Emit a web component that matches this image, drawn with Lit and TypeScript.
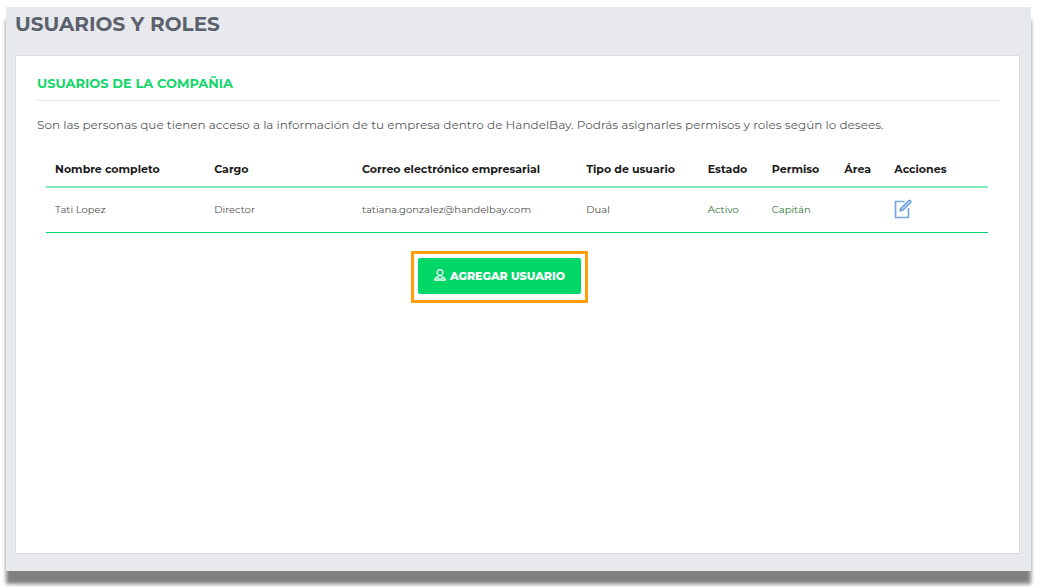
import { LitElement, html, css, svg } from "lit";
import { customElement, state } from "lit/decorators.js";

interface CompanyUser {
  name: string;
  position: string;
  email: string;
  type: string;
  status: string;
  permission: string;
  area: string;
}

const editIcon = svg`
  <svg class="edit-icon" viewBox="0 0 18 20" aria-hidden="true">
    <path d="M10.5 2.5H1.5V18.5H14.5V9" fill="none" stroke="#74a5dc" stroke-width="1.7"/>
    <path d="M5.8 12L6.8 9.3L14.6 1.4Q15.4 0.7 16.5 1.6Q17.6 2.6 16.8 3.6L8.8 11.4Z" fill="#a9cbee" stroke="#6499d4" stroke-width="1.1" stroke-linejoin="round"/>
    <path d="M5.8 12L6.8 9.3L8.8 11.4Z" fill="#6499d4"/>
  </svg>`;

const userIcon = svg`
  <svg class="user-icon" viewBox="0 0 12 12" aria-hidden="true">
    <circle cx="6" cy="3.6" r="2.9" fill="none" stroke="currentColor" stroke-width="1.3"/>
    <path d="M4.7 6.2V7.6L1.4 9L0.8 11.2H11.2L10.6 9L7.3 7.6V6.2" fill="none" stroke="currentColor" stroke-width="1.2"/>
    <path d="M2.5 9.8H9.5" stroke="currentColor" stroke-width="1"/>
  </svg>`;

@customElement("users-table")
export class UsersTable extends LitElement {
  static styles = css`
    :host { display: block; }
    .table {
      width: 100%;
      table-layout: fixed;
      border-collapse: collapse;
      font-size: 11px;
      line-height: 16px;
      text-align: left;
    }
    .table th, .table td { box-sizing: border-box; padding: 0 0 0 9px; white-space: nowrap; }
    .table th { height: 35px; font-weight: 700; color: #1b1b1b; border-bottom: 2px solid #80ebb2; }
    .table td { height: 45px; font-size: 10px; color: #505050; border-bottom: 1px solid #00d766; }
    .table .ok { color: #2c7433; }
    .c-name { width: 16.9%; }
    .c-position { width: 15.7%; }
    .c-email { width: 23.8%; }
    .c-type { width: 12.9%; }
    .c-status { width: 6.8%; }
    .c-permission { width: 7.7%; }
    .c-area { width: 5.3%; }
    .edit { display: block; padding: 0 0 2px; border: 0; background: none; cursor: pointer; }
    .edit-icon { display: block; width: 18px; height: 20px; }
  `;

  @state() private users: CompanyUser[] = [
    {
      name: "Tati Lopez",
      position: "Director",
      email: "tatiana.gonzalez@handelbay.com",
      type: "Dual",
      status: "Activo",
      permission: "Capitán",
      area: "",
    },
  ];

  render() {
    return html`
      <table class="table">
        <thead>
          <tr>
            <th class="c-name" scope="col">Nombre completo</th>
            <th class="c-position" scope="col">Cargo</th>
            <th class="c-email" scope="col">Correo electrónico empresarial</th>
            <th class="c-type" scope="col">Tipo de usuario</th>
            <th class="c-status" scope="col">Estado</th>
            <th class="c-permission" scope="col">Permiso</th>
            <th class="c-area" scope="col">Área</th>
            <th scope="col">Acciones</th>
          </tr>
        </thead>
        <tbody>
          ${this.users.map(
            (u) => html`
              <tr>
                <td>${u.name}</td>
                <td>${u.position}</td>
                <td>${u.email}</td>
                <td>${u.type}</td>
                <td class="ok">${u.status}</td>
                <td class="ok">${u.permission}</td>
                <td>${u.area}</td>
                <td><button class="edit" type="button" aria-label="Editar">${editIcon}</button></td>
              </tr>`
          )}
        </tbody>
      </table>`;
  }
}

@customElement("app-root")
export class AppRoot extends LitElement {
  static styles = css`
    :host {
      display: flex;
      box-sizing: border-box;
      min-height: 100vh;
      padding: 7px 10px 16px 6px;
      background: #fff;
      font-family: Montserrat, Inter, sans-serif;
    }
    .page {
      flex: 1;
      display: flex;
      flex-direction: column;
      padding: 4px 11px 17px 9px;
      background: #e8e9ed;
      box-shadow: 0 13px 4px #808080;
    }
    .title {
      margin: 0 0 18px;
      font-size: 20px;
      line-height: 26px;
      font-weight: 700;
      color: #5b626d;
    }
    .card {
      flex: 1;
      padding: 17px 20px 17px 21px;
      background: #fff;
      border: 1px solid #dcdde1;
    }
    .subtitle {
      margin: 0 0 16px;
      padding: 0 0 7px;
      border-bottom: 1px solid #e3e4e6;
      font-size: 13px;
      line-height: 20px;
      font-weight: 700;
      color: #14d76c;
    }
    .intro { margin: 0; font-size: 12px; line-height: 16px; color: #585b60; }
    .list { padding: 19px 11px 18px 9px; }
    .actions { display: flex; justify-content: center; padding-right: 37px; }
    .highlight { padding: 4px 4px 6px; border: 3px solid #ff9d0a; }
    .add {
      display: flex;
      align-items: center;
      gap: 4px;
      height: 36px;
      padding: 0 16px;
      border: 0;
      border-radius: 2px;
      background: #00d766;
      color: #fff;
      font-family: inherit;
      font-size: 11px;
      font-weight: 800;
      white-space: nowrap;
      cursor: pointer;
    }
    .user-icon { display: block; width: 12px; height: 12px; margin-bottom: 2px; }
  `;

  render() {
    return html`
      <main class="page">
        <h1 class="title">USUARIOS Y ROLES</h1>
        <section class="card">
          <h2 class="subtitle">USUARIOS DE LA COMPAÑIA</h2>
          <p class="intro">Son las personas que tienen acceso a la información de tu empresa dentro de HandelBay. Podrás asignarles permisos y roles según lo desees.</p>
          <users-table class="list"></users-table>
          <div class="actions">
            <div class="highlight">
              <button class="add" type="button">${userIcon}<span>AGREGAR USUARIO</span></button>
            </div>
          </div>
        </section>
      </main>`;
  }
}
